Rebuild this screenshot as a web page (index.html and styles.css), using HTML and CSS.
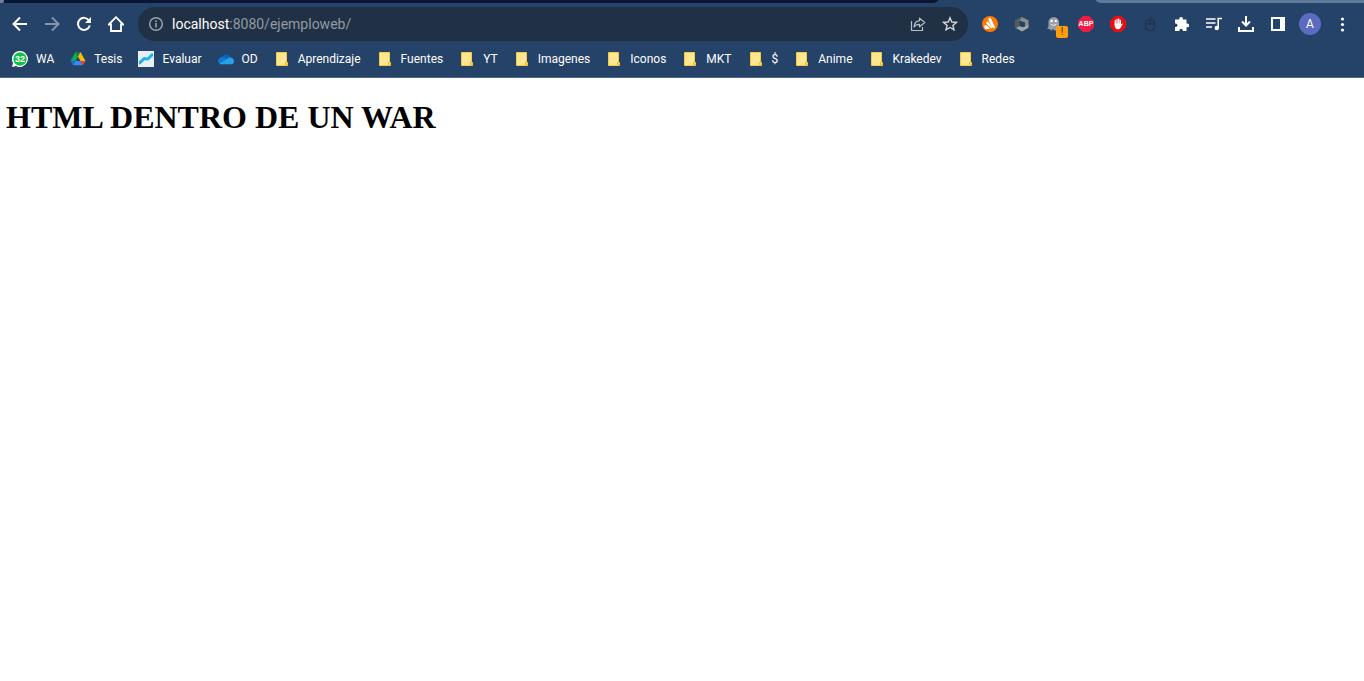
FILE: index.html
```html
<!DOCTYPE html>
<html lang="es">
<head>
<meta charset="utf-8">
<title>Ejemplo web</title>
<link rel="stylesheet" href="styles.css">
</head>
<body>
<svg class="defs" aria-hidden="true">
  <symbol id="folder" viewBox="0 0 16 16"><path d="M2.500 1.500h10v10h1v3h-11z" fill="#ffe693" stroke="#f2ca45"/><path d="M11.500 14V11.500h2V14z" fill="#ffe083" stroke="#e9bd32"/></symbol>
</svg>
<header class="browser">
  <div class="tabs"><span class="tab-corner"></span><span class="tab-dark"></span><span class="tab-active"></span><span class="tab-light"></span></div>
  <div class="toolbar">
    <nav class="nav">
      <button class="tool" aria-label="Atrás"><svg viewBox="0 0 16 16"><path d="M15 8H2M8 1.500 1.500 8 8 14.500" fill="none" stroke="#fff" stroke-width="2"/></svg></button>
      <button class="tool" aria-label="Adelante"><svg viewBox="0 0 16 16"><path d="M1 8h13M8 1.500 14.500 8 8 14.500" fill="none" stroke="#8395ad" stroke-width="2"/></svg></button>
      <button class="tool" aria-label="Recargar"><svg viewBox="0 0 16 16"><path d="M13 4.500A6 6 0 1 0 13.800 9.500" fill="none" stroke="#fff" stroke-width="2"/><path d="M15 1v6H9z" fill="#fff"/></svg></button>
      <button class="tool" aria-label="Inicio"><svg viewBox="0 0 16 16"><path d="M.8 8.500 8 1.200l7.200 7.300H13V15H3V8.500z" fill="none" stroke="#fff" stroke-width="1.800"/></svg></button>
    </nav>
    <div class="omnibox">
      <svg class="info" viewBox="0 0 16 16"><circle cx="8" cy="8" r="6.300" fill="none" stroke="#9aa3ad" stroke-width="1.500"/><path d="M8 7v4.500M8 4.300v1.600" stroke="#9aa3ad" stroke-width="1.600"/></svg>
      <div class="url" role="textbox" aria-label="Dirección"><span class="host">localhost</span>:8080/ejemploweb/</div>
      <button class="tool" aria-label="Compartir"><svg viewBox="0 0 16 16"><path d="M1.500 5v9.500h11V11" fill="none" stroke="#b9bfc7" stroke-width="1.200"/><path d="M9.500 2.200 14.800 6.500 9.500 10.800V8.300C6.800 8.300 5.300 9 4 11c.3-3.300 2-5.800 5.500-6.300z" fill="none" stroke="#b9bfc7" stroke-width="1.200" stroke-linejoin="round"/></svg></button>
      <button class="tool" aria-label="Favorito"><svg viewBox="0 0 16 16"><path d="m8 1.800 1.800 4.200 4.600.4-3.500 3 1.100 4.500-4-2.400-4 2.400 1.100-4.500-3.500-3 4.600-.4z" fill="none" stroke="#d2d5da" stroke-width="1.400"/></svg></button>
    </div>
    <div class="extensions">
      <button class="tool" aria-label="Avast"><svg viewBox="0 0 16 16"><circle cx="8" cy="8" r="8" fill="#ff7800"/><path d="M6.500 2.600c.6-1.200 2.100-1 2.600.2l4 8.700q.3 1-.8.800L9.800 11 6.500 4.200z" fill="#fff"/><path d="M4.300 6.200c.3-.9 1.200-1 1.900-.3l4.500 5.900-1.800.5-4.300-4.500z" fill="#fff"/><path d="M2.500 9.700c.1-.8.900-1 1.600-.6l4.200 3.300-4.600.8c-1.200.1-1.500-2.300-1.200-3.500z" fill="#fff"/></svg></button>
      <button class="tool" aria-label="Extensión"><svg viewBox="0 0 16 16"><path d="M1 4 7 .8l1.500.8L5.500 5v5.500L2 12.300 1 11.500z" fill="#535b63"/><path d="m8 1 6.500 3.300V9L11 10.500V6.500L5.500 4.500z" fill="#858b90"/><path d="m2 12 4-2 3.500 1.200 5-2.700v3.200L8 15.500z" fill="#a3a5a7"/><path d="m6 5.500 4.500 1.700v2.600L7.800 11 6 10z" fill="#26405f"/></svg></button>
      <button class="tool" aria-label="Ghostery"><svg viewBox="0 0 16 16"><path d="M2.500 11V6c0-6.500 10.500-6.500 10.500 0v8l-2-1-2 2-2-2-2 2-1-2-3-.2z" fill="#9a9fa5"/><circle cx="5.700" cy="5" r="1.200" fill="#fff"/><circle cx="9.800" cy="5" r="1.200" fill="#fff"/><path d="M4.800 7.800c1.500 2 4.300 2 5.800 0" fill="none" stroke="#fff"/></svg><span class="badge">!</span></button>
      <button class="tool" aria-label="Adblock Plus"><span class="abp">ABP</span></button>
      <button class="tool" aria-label="AdBlock"><svg viewBox="0 0 16 16"><path d="M4.800 0h6.400L16 4.800v6.400L11.200 16H4.800L0 11.200V4.800z" fill="#e60f12"/><path d="M5.300 9V4.500M7 8V3.300M8.700 8V3M10.300 8V4.300" stroke="#fff" stroke-width="1.300" stroke-linecap="round"/><path d="M4.700 7.500h6.200v1.300l1-1.300q1-.3.800.6L10.500 12q-.8 1.300-2.400 1.300-3 0-3.400-3.600z" fill="#fff"/></svg></button>
      <button class="tool" aria-label="Ratón"><svg viewBox="0 0 16 16"><path d="M3.500 7.500c0-5 9-5 9 0v2.700c0 5.800-9 5.800-9 0zM3 8h10M8 4v4M8 3.800V2.500q0-1 1.500-1.300" fill="none" stroke="#20324a" stroke-width="1.200"/></svg></button>
      <button class="tool" aria-label="Extensiones"><svg viewBox="0 0 16 16"><path d="M1 3.500h4.200v-.7a1.900 1.900 0 0 1 3.800 0v.7h3.500v4h.8a1.900 1.900 0 0 1 0 3.800h-.8V15H8.800v-.5a1.700 1.700 0 0 0-3.400 0v.5H1v-4h.8a1.700 1.700 0 0 0 0-3.400H1z" fill="#fff"/></svg></button>
      <button class="tool" aria-label="Control multimedia"><svg viewBox="0 0 16 16"><path d="M0 3h9.500M0 7h9.500M0 11h6M12.200 12V2.500h3.800" fill="none" stroke="#fff" stroke-width="1.600"/><circle cx="10.800" cy="12" r="2.200" fill="#fff"/></svg></button>
      <button class="tool" aria-label="Descargas"><svg viewBox="0 0 16 16"><path d="M8 0v9M4 5.500l4 4 4-4M1 11v4h14v-4" fill="none" stroke="#fff" stroke-width="2"/></svg></button>
      <button class="tool" aria-label="Panel lateral"><svg viewBox="0 0 16 16"><path d="M1 1h14v14H1zM3 3v10h7V3z" fill="#fff" fill-rule="evenodd"/></svg></button>
      <button class="tool" aria-label="Perfil"><span class="avatar">A</span></button>
      <button class="tool" aria-label="Menú"><svg viewBox="0 0 16 16"><g fill="#fff"><circle cx="8.500" cy="3" r="1.600"/><circle cx="8.500" cy="8.500" r="1.600"/><circle cx="8.500" cy="14" r="1.600"/></g></svg></button>
    </div>
  </div>
  <nav class="bookmarks" aria-label="Marcadores">
    <a href="#"><svg viewBox="0 0 16 16"><path d="M8 0a8 8 0 1 1-4 15L0 16l1-4A8 8 0 0 1 8 0z" fill="#fff"/><circle cx="8" cy="8" r="6.700" fill="#12c04a"/><text x="8" y="11" text-anchor="middle" class="count">32</text></svg>WA</a>
    <a href="#"><svg viewBox="0 0 16 16"><path d="M5.500 1h5l-2.500 4.500z" fill="#188038"/><path d="M5.500 1 8 5.500 3.500 13.500H3L.5 10z" fill="#12a85a"/><path d="M10.500 1 15.500 10h-5L8 5.500z" fill="#fbbc04"/><path d="M.5 10h5L3 14.300z" fill="#1967d2"/><path d="M5.500 10h5l2.500 4.300H3z" fill="#4285f4"/><path d="M10.500 10h5L13 14.300z" fill="#ea4335"/></svg>Tesis</a>
    <a href="#"><svg viewBox="0 0 16 16"><path d="M0 0h16v16H0z" fill="#e9eef1"/><path d="M1 12c3-1 4-5 6-4.500S9 9 11 7s2-3 4-3.500" fill="none" stroke="#1ab8f0" stroke-width="3"/><path d="M1 13c3-1 4-5 6-4.500" fill="none" stroke="#3a8fd0"/></svg>Evaluar</a>
    <a href="#"><svg viewBox="0 0 16 16"><path d="M4 6a4.600 4.600 0 0 1 8.500.6L9 11H2.500z" fill="#0864b8"/><path d="M0 10c0-3 3-5 6-3.500L11 9l-7 4.300C1.500 13.300 0 12 0 10z" fill="#0f78d4"/><path d="M9 8c4-3.500 7-.2 7 2.300a3 3 0 0 1-3 3H4c-1 0-1.700-.3-2.400-.9z" fill="#28a0e8"/></svg>OD</a>
    <a href="#"><svg><use href="#folder"/></svg>Aprendizaje</a>
    <a href="#"><svg><use href="#folder"/></svg>Fuentes</a>
    <a href="#"><svg><use href="#folder"/></svg>YT</a>
    <a href="#"><svg><use href="#folder"/></svg>Imagenes</a>
    <a href="#"><svg><use href="#folder"/></svg>Iconos</a>
    <a href="#"><svg><use href="#folder"/></svg>MKT</a>
    <a href="#"><svg><use href="#folder"/></svg>$</a>
    <a href="#"><svg><use href="#folder"/></svg>Anime</a>
    <a href="#"><svg><use href="#folder"/></svg>Krakedev</a>
    <a href="#"><svg><use href="#folder"/></svg>Redes</a>
  </nav>
</header>
<main class="page"><h1>HTML DENTRO DE UN WAR</h1></main>
</body>
</html>
```
FILE: styles.css
```css
* { box-sizing: border-box; }
body { margin: 0; background: #fff; color: #000; }
svg { display: block; flex: none; width: 16px; height: 16px; }
.defs { position: absolute; width: 0; height: 0; }
.browser { background: #254268; border-bottom: 1px solid #4e6885; font-family: Roboto, sans-serif; }
.tabs { display: flex; height: 3px; }
.tab-corner { width: 4px; background: #6b83a3; border-bottom-right-radius: 3px; }
.tab-dark { flex: 934; background: #0a1433; border-bottom-right-radius: 6px 3px; }
.tab-active { flex: 158; }
.tab-light { flex: 268; background: #607a9b; border-bottom-left-radius: 6px 3px; }
.toolbar { display: flex; align-items: center; padding: 4px 6px 0 4px; }
.nav, .extensions { display: flex; }
.tool { position: relative; display: flex; align-items: center; justify-content: center; flex: none; width: 32px; height: 32px; padding: 0; border: 0; background: none; font-family: inherit; }
.omnibox { display: flex; align-items: center; flex: 1; height: 34px; margin: 0 6px; padding: 0 2px 0 10px; border-radius: 17px; background: #203045; }
.url { flex: 1; margin-left: 8px; color: #929ba6; font-size: 14px; line-height: 20px; white-space: nowrap; }
.host { color: #fff; }
.badge { position: absolute; left: 18px; top: 18px; width: 12px; height: 12px; border-radius: 2px; background: #ff9d0a; color: #2b2b20; font-size: 10px; line-height: 12px; }
.abp { width: 16px; height: 16px; background: #ee1c43; color: #fff; font: bold 7px/16px "Liberation Sans", sans-serif; clip-path: polygon(30% 0, 70% 0, 100% 30%, 100% 70%, 70% 100%, 30% 100%, 0 70%, 0 30%); }
.avatar { width: 22px; height: 22px; border-radius: 50%; background: #5c6bc0; color: #fff; font: 12px/22px Roboto, sans-serif; }
.bookmarks { display: flex; align-items: center; gap: 16px; height: 36px; padding: 0 12px; }
.bookmarks a { display: flex; align-items: center; gap: 8px; color: #fff; font-size: 12px; line-height: 16px; text-decoration: none; white-space: nowrap; }
.count { fill: #fff; font: bold 9px "Liberation Sans", sans-serif; }
.page { padding: 0 6px; }
.page h1 { margin: 21px 0; font: bold 32px/36px "Liberation Serif", serif; }
```
